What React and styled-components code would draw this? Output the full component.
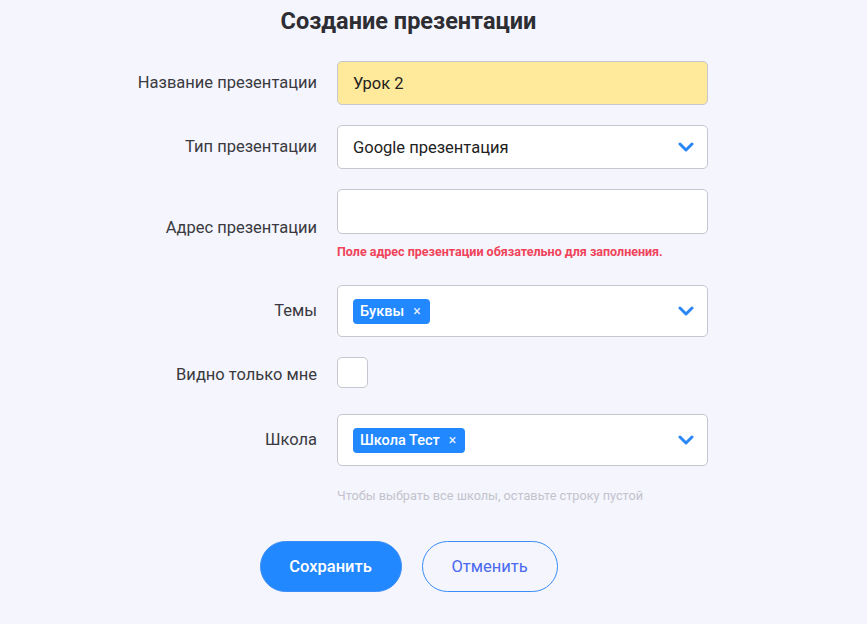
import React from 'react';
import styled, { createGlobalStyle } from 'styled-components';

const GlobalStyle = createGlobalStyle`
  html, body {
    margin: 0;
    padding: 0;
    background: #f4f5fd;
  }
  body {
    font-family: Roboto, "Liberation Sans", sans-serif;
  }
`;

const Chevron = () => (
  <svg width="16" height="10" viewBox="0 0 16 10" fill="none">
    <path d="M2 2l6 6 6-6" stroke="#2a87f5" strokeWidth="3" strokeLinecap="round" strokeLinejoin="round" />
  </svg>
);

const Tag = ({ children }) => (
  <Chip>
    {children}
    <ChipClose>×</ChipClose>
  </Chip>
);

const App = () => {
  return (
    <Page>
      <GlobalStyle />
      <Title>Создание презентации</Title>
      <Form>
        <Row $mt={25}>
          <Label>Название презентации</Label>
          <TextInput $filled $h={44}>Урок 2</TextInput>
        </Row>

        <Row $mt={20}>
          <Label>Тип презентации</Label>
          <Select $h={44}>
            <SelectValue>Google презентация</SelectValue>
            <Chevron />
          </Select>
        </Row>

        <Row $mt={20}>
          <Label>Адрес презентации</Label>
          <Field>
            <TextInput $h={45} />
            <ErrorText>Поле адрес презентации обязательно для заполнения.</ErrorText>
          </Field>
        </Row>

        <Row $mt={19}>
          <Label>Темы</Label>
          <Select $h={52}>
            <Tag>Буквы</Tag>
            <Chevron />
          </Select>
        </Row>

        <Row $mt={20}>
          <Label $shift={5}>Видно только мне</Label>
          <Checkbox />
        </Row>

        <Row $mt={26}>
          <Label>Школа</Label>
          <Select $h={52}>
            <Tag>Школа Тест</Tag>
            <Chevron />
          </Select>
        </Row>

        <Row $mt={22}>
          <span />
          <Hint>Чтобы выбрать все школы, оставьте строку пустой</Hint>
        </Row>
      </Form>

      <Buttons>
        <Button $primary $w={142}>Сохранить</Button>
        <Button $w={136}>Отменить</Button>
      </Buttons>
    </Page>
  );
};

export default App;

const Page = styled.div`
  width: 817px;
  padding-top: 6px;
  padding-bottom: 30px;
  display: flex;
  flex-direction: column;
  align-items: center;
`;

const Title = styled.h1`
  margin: 0;
  font-size: 23.5px;
  line-height: 30px;
  font-weight: 700;
  color: #2d2d33;
`;

const Form = styled.div`
  align-self: stretch;
  display: flex;
  flex-direction: column;
`;

const Row = styled.div`
  display: grid;
  grid-template-columns: 317px 371px;
  column-gap: 20px;
  align-items: center;
  margin-top: ${(p) => p.$mt}px;
`;

const Label = styled.div`
  text-align: right;
  font-size: 16.5px;
  line-height: 20px;
  color: #3a3a40;
  padding-top: ${(p) => p.$shift || 0}px;
`;

const Field = styled.div`
  display: flex;
  flex-direction: column;
  padding-bottom: 6px;
`;

const Box = styled.div`
  box-sizing: border-box;
  height: ${(p) => p.$h}px;
  border: 1px solid #c6c6ce;
  border-radius: 5px;
  background: #fff;
`;

const TextInput = styled(Box)`
  display: flex;
  align-items: center;
  padding: 0 15px;
  font-size: 16.5px;
  color: #222;
  background: ${(p) => (p.$filled ? '#ffe99b' : '#fff')};
`;

const Select = styled(Box)`
  display: flex;
  align-items: center;
  justify-content: space-between;
  padding: 0 13px 0 15px;
`;

const SelectValue = styled.span`
  font-size: 16.5px;
  color: #222;
`;

const Chip = styled.span`
  display: inline-flex;
  align-items: center;
  height: 25px;
  padding: 0 9px 0 7px;
  border-radius: 4px;
  background: #2288ff;
  color: #fff;
  font-size: 14.5px;
  font-weight: 500;
`;

const ChipClose = styled.span`
  margin-left: 9px;
  font-size: 14px;
  font-weight: 400;
  color: #e6f0ff;
`;

const ErrorText = styled.div`
  margin-top: 10px;
  font-size: 12.5px;
  line-height: 16px;
  font-weight: 700;
  color: #f0435a;
`;

const Checkbox = styled.div`
  box-sizing: border-box;
  width: 31px;
  height: 31px;
  border: 1px solid #c6c6ce;
  border-radius: 5px;
  background: #fff;
`;

const Hint = styled.div`
  font-size: 12.7px;
  line-height: 16px;
  color: #c3c3cc;
`;

const Buttons = styled.div`
  display: flex;
  gap: 20px;
  margin-top: 37px;
`;

const Button = styled.button`
  box-sizing: border-box;
  width: ${(p) => p.$w}px;
  height: 51px;
  padding: 0;
  border-radius: 26px;
  border: 1px solid #3a8cf6;
  background: ${(p) => (p.$primary ? '#2288ff' : 'transparent')};
  color: ${(p) => (p.$primary ? '#fff' : '#4b69ee')};
  font-family: Roboto, "Liberation Sans", sans-serif;
  font-size: 16.5px;
  font-weight: ${(p) => (p.$primary ? 500 : 400)};
  cursor: pointer;
`;
